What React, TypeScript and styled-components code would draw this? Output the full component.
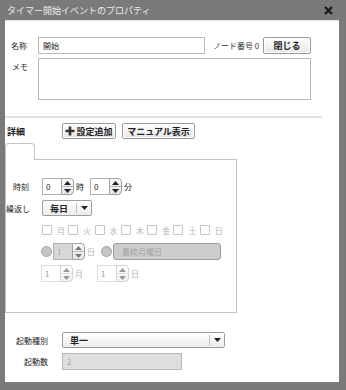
import styled, { createGlobalStyle } from "styled-components";

const GlobalStyle = createGlobalStyle`
  html, body {
    margin: 0;
    padding: 0;
    background: #7a7a7a;
  }
  body {
    font-family: "Noto Sans CJK JP", "Noto Sans", sans-serif;
    font-size: 8px;
    color: #222;
  }
`;

const Dialog = styled.div`
  width: 346px;
  height: 390px;
  box-sizing: border-box;
  background: #7a7a7a;
  padding: 0 7px 8px 5px;
  display: flex;
  flex-direction: column;
`;

const TitleBar = styled.div`
  height: 20px;
  display: flex;
  align-items: center;
  justify-content: space-between;
  padding: 0 6px 0 2px;
  color: #ececec;
  font-size: 9px;
`;

const Body = styled.div`
  flex: 1;
  background: #fff;
  border-top: 1px solid #e4e4e4;
  display: flex;
  flex-direction: column;
`;

const Row = styled.div<{ $top: number }>`
  display: flex;
  align-items: center;
  margin-top: ${(p) => p.$top}px;
`;

const TopRow = styled(Row)`
  align-items: flex-start;
`;

const Label = styled.div<{ $width: number; $right?: boolean; $pad?: number }>`
  width: ${(p) => p.$width}px;
  box-sizing: border-box;
  padding-left: ${(p) => p.$pad ?? 0}px;
  text-align: ${(p) => (p.$right ? "right" : "left")};
  flex-shrink: 0;
  white-space: nowrap;
`;

const TextInput = styled.div<{ $width: number; $disabled?: boolean }>`
  width: ${(p) => p.$width}px;
  height: 17px;
  box-sizing: border-box;
  border: 1px solid #b8b8b8;
  background: ${(p) => (p.$disabled ? "#dedede" : "#fff")};
  color: ${(p) => (p.$disabled ? "#a8a8a8" : "#222")};
  padding-left: 4px;
  display: flex;
  align-items: center;
`;

const TextArea = styled.div`
  width: 273px;
  height: 42px;
  box-sizing: border-box;
  border: 1px solid #b8b8b8;
  background: #fff;
`;

const NodeNo = styled.div`
  margin-left: 8px;
  width: 50px;
  white-space: nowrap;
  color: #333;
`;

const Button = styled.div<{ $width: number; $height: number }>`
  width: ${(p) => p.$width}px;
  height: ${(p) => p.$height}px;
  box-sizing: border-box;
  border: 1px solid #9a9a9a;
  border-radius: 2px;
  background: linear-gradient(#ffffff, #e6e6e6);
  box-shadow: inset 0 0 0 1px #fff;
  display: flex;
  align-items: center;
  justify-content: center;
  gap: 1px;
  font-size: 9px;
  font-weight: bold;
  white-space: nowrap;
`;

const Separator = styled.div`
  margin-top: 16px;
  width: 317px;
  height: 2px;
  background: #e2e2e2;
`;

const SectionTitle = styled.div`
  width: 55px;
  padding-left: 2px;
  font-size: 9px;
  font-weight: bold;
`;

const TabStrip = styled.div`
  display: flex;
  margin-top: 4px;
  width: 232px;
`;

const Tab = styled.div`
  width: 30px;
  height: 17px;
  box-sizing: border-box;
  border: 1px solid #c4c4c4;
  border-bottom: none;
  border-radius: 4px 4px 0 0;
  background: #fff;
`;

const TabFill = styled.div`
  flex: 1;
  border-bottom: 1px solid #c4c4c4;
`;

const Panel = styled.div`
  width: 232px;
  height: 153px;
  box-sizing: border-box;
  border: 1px solid #c4c4c4;
  border-top: none;
  display: flex;
  flex-direction: column;
`;

const Unit = styled.span<{ $faded?: boolean }>`
  margin: 0 6px 0 2px;
  color: ${(p) => (p.$faded ? "#b0b0b0" : "#222")};
`;

const SpinWrap = styled.div<{ $faded?: boolean }>`
  display: flex;
  height: 17px;
  opacity: ${(p) => (p.$faded ? 0.45 : 1)};
`;

const SpinInput = styled.div<{ $disabled?: boolean }>`
  width: 19px;
  box-sizing: border-box;
  border: 1px solid #b0b0b0;
  border-right: none;
  background: ${(p) => (p.$disabled ? "#d8d8d8" : "#fff")};
  color: ${(p) => (p.$disabled ? "#aaa" : "#222")};
  padding-left: 3px;
  display: flex;
  align-items: center;
`;

const SpinBtns = styled.div`
  width: 13px;
  box-sizing: border-box;
  border: 1px solid #a0a0a0;
  border-radius: 0 4px 4px 0;
  background: linear-gradient(#fdfdfd, #e4e4e4);
  display: flex;
  flex-direction: column;
`;

const SpinHalf = styled.div<{ $top?: boolean }>`
  flex: 1;
  display: flex;
  align-items: center;
  justify-content: center;
  border-bottom: ${(p) => (p.$top ? "1px solid #b5b5b5" : "none")};
`;

const Select = styled.div<{ $width: number }>`
  width: ${(p) => p.$width}px;
  height: 16px;
  box-sizing: border-box;
  border: 1px solid #9c9c9c;
  border-radius: 2px;
  background: linear-gradient(#ffffff, #ececec);
  display: flex;
  align-items: center;
  font-size: 9px;
  font-weight: bold;
`;

const SelectText = styled.div`
  flex: 1;
  padding-left: 7px;
`;

const SelectArrow = styled.div`
  width: 14px;
  height: 10px;
  border-left: 1px solid #c0c0c0;
  display: flex;
  align-items: center;
  justify-content: center;
`;

const DayList = styled.div`
  display: flex;
  margin-left: 36px;
  margin-top: 9px;
  height: 10px;
  align-items: center;
`;

const Day = styled.div`
  width: 26.3px;
  display: flex;
  align-items: center;
  color: #b4b4b4;
`;

const CheckBox = styled.div`
  width: 10px;
  height: 10px;
  box-sizing: border-box;
  border: 1px solid #c4c4c4;
  border-radius: 1px;
  margin-right: 5px;
`;

const Radio = styled.div`
  width: 11px;
  height: 11px;
  box-sizing: border-box;
  border-radius: 50%;
  border: 1px solid #a4a4a4;
  background: #c6c6c6;
  margin-right: 1px;
`;

const Disabled = styled.div`
  width: 108px;
  height: 17px;
  box-sizing: border-box;
  border: 1px solid #9a9a9a;
  border-radius: 3px;
  background: #cdcdcd;
  color: #a2a2a2;
  padding-left: 8px;
  display: flex;
  align-items: center;
`;

const Indent = styled.div<{ $left: number }>`
  width: ${(p) => p.$left}px;
  flex-shrink: 0;
`;

const Arrow = ({ up, color = "#222" }: { up?: boolean; color?: string }) => (
  <svg width="7" height="4" viewBox="0 0 7 4">
    <path d={up ? "M0 4 L3.5 0 L7 4 Z" : "M0 0 L3.5 4 L7 0 Z"} fill={color} />
  </svg>
);

const Spinner = ({
  value,
  faded,
  disabled,
}: {
  value: string;
  faded?: boolean;
  disabled?: boolean;
}) => (
  <SpinWrap $faded={faded}>
    <SpinInput $disabled={disabled}>{value}</SpinInput>
    <SpinBtns>
      <SpinHalf $top>
        <Arrow up color={disabled ? "#777" : "#222"} />
      </SpinHalf>
      <SpinHalf>
        <Arrow color={disabled ? "#777" : "#222"} />
      </SpinHalf>
    </SpinBtns>
  </SpinWrap>
);

const days = ["月", "火", "水", "木", "金", "土", "日"];

export default function App() {
  return (
    <>
      <GlobalStyle />
      <Dialog>
        <TitleBar>
          <span>タイマー開始イベントのプロパティ</span>
          <svg width="9" height="9" viewBox="0 0 9 9">
            <path d="M1 1 L8 8 M8 1 L1 8" stroke="#1a1a1a" strokeWidth="2.4" />
          </svg>
        </TitleBar>
        <Body>
          <Row $top={16}>
            <Label $width={33} $pad={6}>名称</Label>
            <TextInput $width={167}>開始</TextInput>
            <NodeNo>ノード番号 0</NodeNo>
            <Button $width={48} $height={17}>閉じる</Button>
          </Row>
          <TopRow $top={4}>
            <Label $width={33} $pad={7} style={{ paddingTop: 3 }}>メモ</Label>
            <TextArea />
          </TopRow>
          <Separator />
          <Row $top={5}>
            <SectionTitle>詳細</SectionTitle>
            <Button $width={54} $height={16}>
              <svg width="10" height="10" viewBox="0 0 10 10">
                <path d="M5 0.5 V9.5 M0.5 5 H9.5" stroke="#333" strokeWidth="2.6" />
              </svg>
              設定追加
            </Button>
            <Indent $left={6} />
            <Button $width={73} $height={16}>マニュアル表示</Button>
          </Row>
          <TabStrip>
            <Tab />
            <TabFill />
          </TabStrip>
          <Panel>
            <Row $top={18}>
              <Label $width={23} $right>時刻</Label>
              <Indent $left={13} />
              <Spinner value="0" />
              <Unit>時</Unit>
              <Spinner value="0" />
              <Unit>分</Unit>
            </Row>
            <Row $top={5}>
              <Label $width={23} $right>繰返し</Label>
              <Indent $left={13} />
              <Select $width={50}>
                <SelectText>毎日</SelectText>
                <SelectArrow>
                  <Arrow />
                </SelectArrow>
              </Select>
            </Row>
            <DayList>
              {days.map((d) => (
                <Day key={d}>
                  <CheckBox />
                  {d}
                </Day>
              ))}
            </DayList>
            <Row $top={8}>
              <Indent $left={35} />
              <Radio />
              <Spinner value="1" disabled />
              <Unit $faded>日</Unit>
              <Radio />
              <Disabled>最終月曜日</Disabled>
            </Row>
            <Row $top={5}>
              <Indent $left={35} />
              <Spinner value="1" faded />
              <Unit $faded>月</Unit>
              <Indent $left={8} />
              <Spinner value="1" faded />
              <Unit $faded>日</Unit>
            </Row>
          </Panel>
          <Row $top={19}>
            <Label $width={43} $right>起動種別</Label>
            <Indent $left={14} />
            <Select $width={163}>
              <SelectText>単一</SelectText>
              <SelectArrow>
                <Arrow />
              </SelectArrow>
            </Select>
          </Row>
          <Row $top={5}>
            <Label $width={43} $right>起動数</Label>
            <Indent $left={14} />
            <TextInput $width={120} $disabled>2</TextInput>
          </Row>
        </Body>
      </Dialog>
    </>
  );
}
